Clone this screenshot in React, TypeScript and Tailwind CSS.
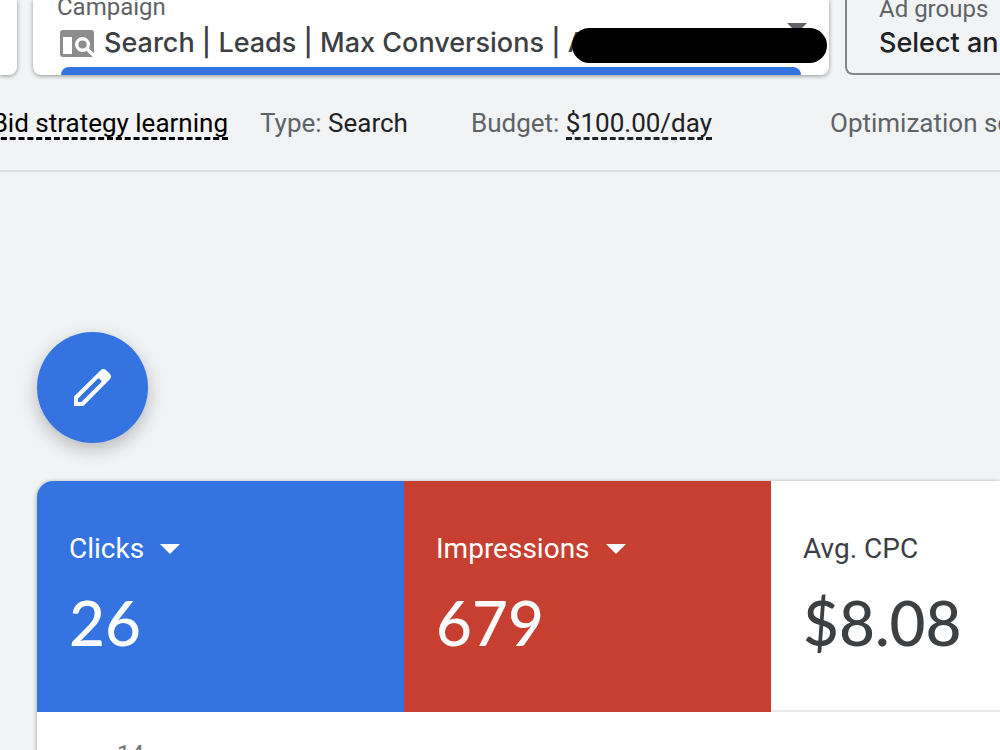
import { ReactNode } from "react";

function Caret({ className = "" }: { className?: string }) {
  return (
    <svg viewBox="0 0 20 10" className={`h-[10px] w-5 fill-current ${className}`} aria-hidden="true">
      <path d="M0 0h20L10 10z" />
    </svg>
  );
}

function SearchCampaignIcon() {
  return (
    <svg viewBox="0 0 34 27" className="h-[27px] w-[34px] shrink-0" aria-hidden="true">
      <path d="M3 0h28a3 3 0 0 1 3 3v20l-2 4H3a3 3 0 0 1-3-3V3a3 3 0 0 1 3-3z" fill="#8c8c8c" />
      <path d="M3 7h9v17H3z" fill="#fff" />
      <circle cx="22.5" cy="14.5" r="5.8" fill="none" stroke="#fff" strokeWidth="3.4" />
      <path d="M26.5 18.5l7.5 7" stroke="#fff" strokeWidth="3.4" />
    </svg>
  );
}

function PencilIcon() {
  return (
    <svg viewBox="0 0 37 37" className="h-[37px] w-[37px]" aria-hidden="true">
      <path
        fillRule="evenodd"
        fill="#fff"
        d="M0 37v-9.4L26.4 1.4a4.4 4.4 0 0 1 6 0l3.2 3.2a4.4 4.4 0 0 1 0 6L9.4 37zM4 33h3.4L26.4 14a2.4 2.4 0 0 0 0-3.6 2.4 2.4 0 0 0-3.4 0L4 29.4z"
      />
    </svg>
  );
}

function Header() {
  return (
    <header className="flex items-stretch gap-4 whitespace-nowrap">
      <div className="w-[17px] shrink-0 rounded-br-lg bg-white shadow-[0_1px_4px_rgba(0,0,0,0.4)]" />
      <div className="relative flex h-[75px] w-[796px] shrink-0 flex-col rounded-b-lg bg-white text-[#3c4043] shadow-[0_1px_4px_rgba(0,0,0,0.4)]">
        <div className="-mt-2 pl-6 text-[24px] leading-[30px] text-[#5f6368]">Campaign</div>
        <button className="flex items-center gap-2.5 pt-1 pl-[27px] text-left font-[Inter,sans-serif] text-[27px] leading-[34px] font-medium">
          <SearchCampaignIcon />
          <span>Search | Leads | Max Conversions | A</span>
        </button>
        <Caret className="absolute top-[23px] right-[22px] text-[#5f6368]" />
        <div className="absolute top-[28px] right-0.5 h-[35px] w-[255px] rounded-full bg-black" />
        <div className="mx-7 mt-auto h-2 rounded-t-lg bg-[#3573e1]" />
      </div>
      <div className="h-[75px] w-[400px] shrink-0 rounded-bl-lg border-b-2 border-l-2 border-[#80868b] pl-8">
        <div className="-mt-1.5 text-[24px] leading-[30px] text-[#5f6368]">Ad groups</div>
        <button className="block pt-0.5 font-[Inter,sans-serif] text-[27px] leading-[34px] font-medium text-[#202124]">
          Select an ad group
        </button>
      </div>
    </header>
  );
}

function Editable({ children }: { children: ReactNode }) {
  return <button className="border-b-3 border-dashed border-current leading-[28px]">{children}</button>;
}

function StatusBar() {
  return (
    <div className="flex h-[97px] items-baseline border-b-2 border-[#dadce0] pt-[34px] text-[26px] leading-[28px] whitespace-nowrap text-[#5f6368]">
      <div className="flex w-[228px] shrink-0 justify-end text-black">
        <Editable>Bid strategy learning</Editable>
      </div>
      <div className="ml-8 w-[211px] shrink-0">
        Type: <span className="text-[#202124]">Search</span>
      </div>
      <div className="w-[359px] shrink-0">
        Budget:{" "}
        <span className="text-[#202124]">
          <Editable>$100.00/day</Editable>
        </span>
      </div>
      <div className="shrink-0">Optimization score</div>
    </div>
  );
}

type MetricProps = { label: string; value: string; color: string; menu?: boolean };

function Metric({ label, value, color, menu }: MetricProps) {
  return (
    <div className={`flex h-[231px] w-[367px] shrink-0 flex-col items-start pt-[51px] pl-8 ${color}`}>
      <button className="flex items-center gap-4 text-[28px] leading-[34px]">
        {label}
        {menu && <Caret />}
      </button>
      <div className="mt-[18px] font-[Lato,sans-serif] text-[62px] leading-[76px] font-medium">{value}</div>
    </div>
  );
}

const metrics: MetricProps[] = [
  { label: "Clicks", value: "26", color: "bg-[#3573e1] text-white", menu: true },
  { label: "Impressions", value: "679", color: "bg-[#c73f31] text-white", menu: true },
  { label: "Avg. CPC", value: "$8.08", color: "border-b-2 border-[#e8eaed] text-[#3c4043]" },
];

function App() {
  return (
    <div className="h-screen overflow-hidden bg-[#f1f3f5] font-[Roboto,sans-serif]">
      <Header />
      <StatusBar />
      <main className="pt-[160px] pl-[37px]">
        <button
          aria-label="Edit"
          className="flex h-[111px] w-[111px] items-center justify-center rounded-full bg-[#3573e1] shadow-[0_6px_18px_rgba(0,0,0,0.25)]"
        >
          <PencilIcon />
        </button>
        <section className="mt-[38px] overflow-hidden rounded-tl-2xl bg-white shadow-[0_1px_5px_rgba(0,0,0,0.35)]">
          <div className="flex">
            {metrics.map((m) => (
              <Metric key={m.label} {...m} />
            ))}
          </div>
          <div className="pt-7 pl-20 text-[24px] leading-[28px] text-[#757575]">14</div>
        </section>
      </main>
    </div>
  );
}

export default App;
